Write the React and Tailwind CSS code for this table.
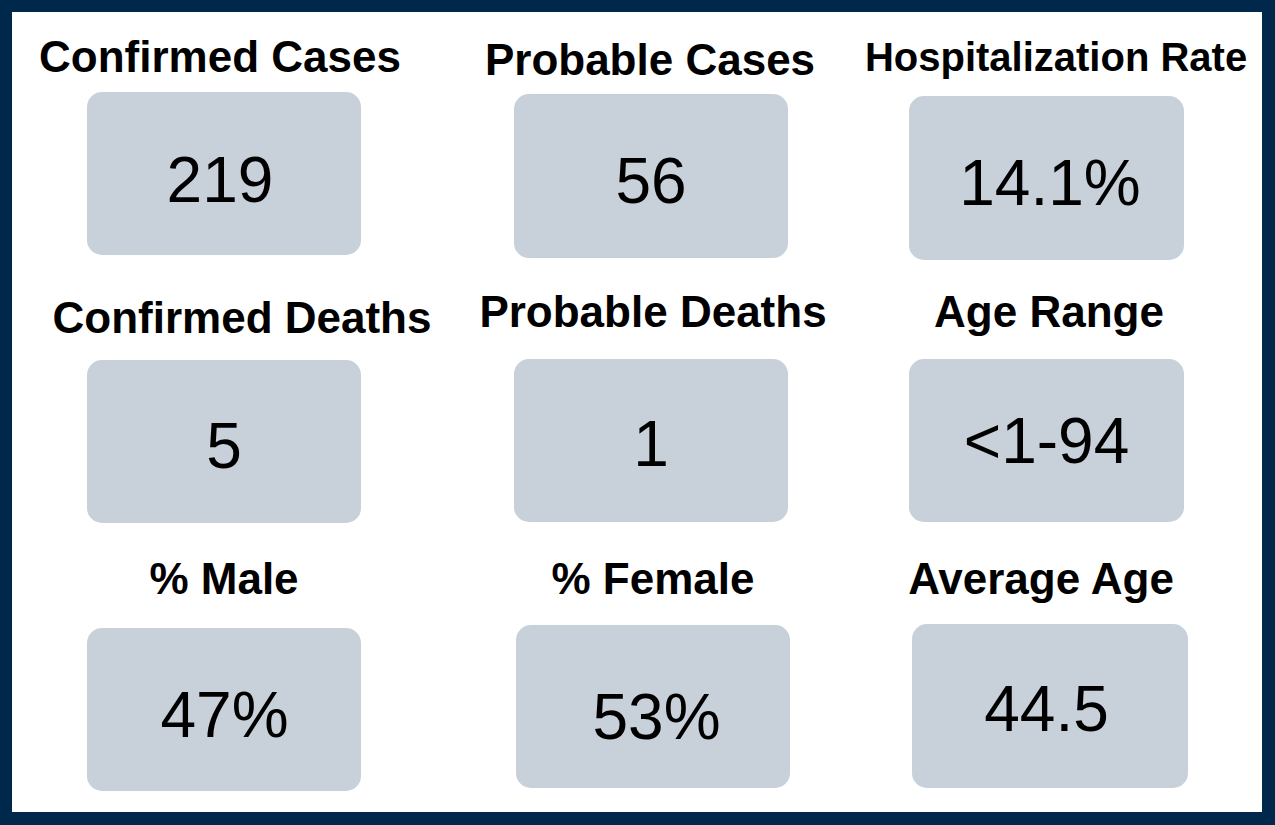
import React from "react";

// each stat: label, value, and the hand-tuned spacing classes for its cell
const stats = [
  {
    label: "Confirmed Cases",
    value: "219",
    labelCls: "mt-[23px] mr-[8px] text-[44px]",
    boxCls: "mt-[13px] w-[274px] h-[163px]",
    valueCls: "pt-[13px] pr-[8px]",
  },
  {
    label: "Probable Cases",
    value: "56",
    labelCls: "mt-[26px] mr-[2px] text-[44px]",
    boxCls: "mt-[12px] w-[274px] h-[164px]",
    valueCls: "pt-[10px]",
  },
  {
    label: "Hospitalization Rate",
    value: "14.1%",
    labelCls: "mt-[25px] ml-[19px] text-[40px]",
    boxCls: "mt-[19px] w-[275px] h-[164px]",
    valueCls: "pt-[9px] pl-[7px]",
  },
  {
    label: "Confirmed Deaths",
    value: "5",
    labelCls: "mt-[16px] ml-[36px] text-[44px]",
    boxCls: "mt-[20px] w-[274px] h-[163px]",
    valueCls: "pt-[9px]",
  },
  {
    label: "Probable Deaths",
    value: "1",
    labelCls: "mt-[10px] ml-[4px] text-[44px]",
    boxCls: "mt-[25px] w-[274px] h-[163px]",
    valueCls: "pt-[6px]",
  },
  {
    label: "Age Range",
    value: "<1-94",
    labelCls: "mt-[10px] ml-[5px] text-[44px]",
    boxCls: "mt-[25px] w-[275px] h-[163px]",
    valueCls: "pt-0",
  },
  {
    label: "% Male",
    value: "47%",
    labelCls: "mt-[12px] text-[44px]",
    boxCls: "mt-[27px] w-[274px] h-[163px]",
    valueCls: "pt-[11px] pl-[1px]",
  },
  {
    label: "% Female",
    value: "53%",
    labelCls: "mt-[12px] ml-[4px] text-[44px]",
    boxCls: "mt-[24px] ml-[4px] w-[274px] h-[163px]",
    valueCls: "pt-[20px] pl-[7px]",
  },
  {
    label: "Average Age",
    value: "44.5",
    labelCls: "mt-[12px] mr-[11px] text-[44px]",
    boxCls: "mt-[23px] ml-[7px] w-[276px] h-[164px]",
    valueCls: "pt-[5px] pr-[7px]",
  },
];

const StatCell = ({ stat }) => (
  <div className="flex flex-col items-center">
    <h2
      className={`whitespace-nowrap font-bold leading-none text-black ${stat.labelCls}`}
    >
      {stat.label}
    </h2>
    <div
      className={`flex items-center justify-center rounded-[15px] bg-[#c8d0da] ${stat.boxCls}`}
    >
      <span className={`text-[64px] leading-none text-black ${stat.valueCls}`}>
        {stat.value}
      </span>
    </div>
  </div>
);

export default function App() {
  return (
    <div
      className="w-[1275px] h-[825px] border-[#00284b] border-t-[12px] border-l-[12px] border-r-[13px] border-b-[13px] bg-white overflow-hidden"
      style={{ fontFamily: '"Liberation Sans", Arial, sans-serif' }}
    >
      <div className="grid grid-cols-[424px_430px_361px] grid-rows-[268px_265px_267px]">
        {stats.map((s) => (
          <StatCell key={s.label} stat={s} />
        ))}
      </div>
    </div>
  );
}
